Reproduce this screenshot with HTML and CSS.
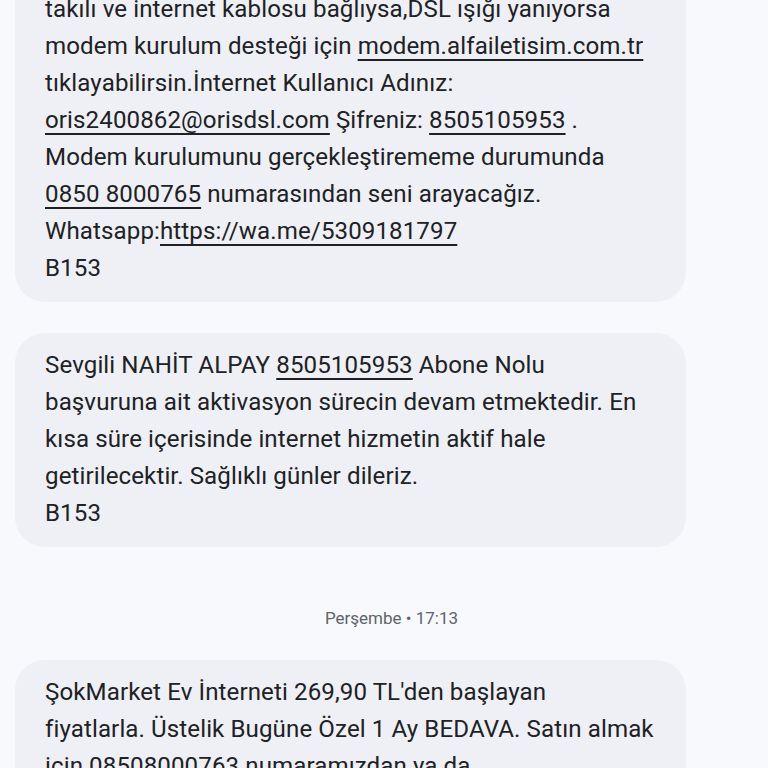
FILE: index.html
```html
<!DOCTYPE html>
<html lang="tr">
<head>
<meta charset="utf-8">
<link rel="stylesheet" href="styles.css">
</head>
<body>
<main class="thread">
  <div class="bubble first">
    takılı ve internet kablosu bağlıysa,DSL ışığı yanıyorsa<br>modem kurulum desteği için <a class="link">modem.alfailetisim.com.tr</a><br>tıklayabilirsin.İnternet Kullanıcı Adınız:<br><a class="link">oris2400862@orisdsl.com</a> Şifreniz: <a class="link">8505105953</a> .<br>Modem kurulumunu gerçekleştirememe durumunda<br><a class="link">0850 8000765</a> numarasından seni arayacağız.<br>Whatsapp:<a class="link">https://wa.me/5309181797</a><br>B153
  </div>
  <div class="bubble">
    Sevgili NAHİT ALPAY <a class="link">8505105953</a> Abone Nolu<br>başvuruna ait aktivasyon sürecin devam etmektedir. En<br>kısa süre içerisinde internet hizmetin aktif hale<br>getirilecektir. Sağlıklı günler dileriz.<br>B153
  </div>
  <div class="stamp">Perşembe • 17:13</div>
  <div class="bubble">
    ŞokMarket Ev İnterneti 269,90 TL'den başlayan<br>fiyatlarla. Üstelik Bugüne Özel 1 Ay BEDAVA. Satın almak<br>için 08508000763 numaramızdan ya da<br>https://sokmarket.com.tr adresinden başvurabilirsin.
  </div>
</main>
</body>
</html>
```

FILE: styles.css
```css
html, body {
  margin: 0;
  padding: 0;
  background: #f8f9fd;
  overflow: hidden;
}
.thread {
  display: flex;
  flex-direction: column;
  align-items: flex-start;
  gap: 31px;
  padding-left: 15px;
  font-family: Roboto, "Noto Sans", sans-serif;
  color: #202124;
}
.bubble {
  box-sizing: border-box;
  width: 671px;
  padding: 14px 30px 15px 30px;
  background: #eff0f5;
  border-radius: 30px;
  font-size: 24.1px;
  line-height: 37px;
  letter-spacing: 0.1px;
  white-space: nowrap;
}
.bubble.first {
  margin-top: -23px;
  border-top-left-radius: 0;
  border-top-right-radius: 0;
}
.link {
  color: inherit;
  text-decoration: underline;
  text-decoration-thickness: 2px;
  text-underline-offset: 5px;
}
.stamp {
  align-self: stretch;
  text-align: center;
  font-size: 17px;
  line-height: 20px;
  color: #5f6368;
  margin: 30px 0 1px 0;
}
```
